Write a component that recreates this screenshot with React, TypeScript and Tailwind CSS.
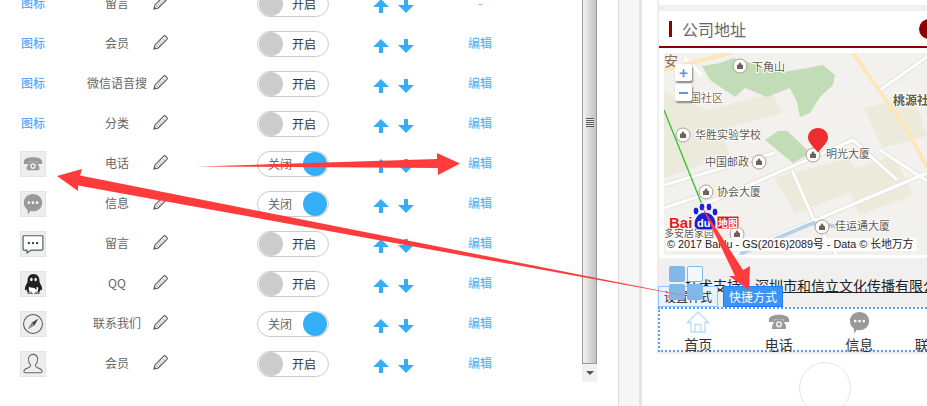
const rows = [
  { icon: "text", name: "留言", on: false },
  { icon: "text", name: "会员", on: false },
  { icon: "text", name: "微信语音搜", on: false },
  { icon: "text", name: "分类", on: false },
  { icon: "phone", name: "电话", on: true },
  { icon: "bubble", name: "信息", on: true },
  { icon: "dialog", name: "留言", on: false },
  { icon: "qq", name: "QQ", on: false },
  { icon: "compass", name: "联系我们", on: true },
  { icon: "user", name: "会员", on: false },
];

function PhoneGlyph({ className }: { className?: string }) {
  return (
    <svg viewBox="0 0 24 24" className={className}>
      <path fill="#999" d="M1 9.5C1 5.5 6.500 4 12 4s11 1.500 11 5.500V12h-6V9H7v3H1z" />
      <path fill="#999" d="M8 9h8l3.500 7v3.500h-15V16z" />
      <circle cx="12" cy="14.500" r="3.400" fill="#eee" />
      <circle cx="12" cy="14.500" r="1.600" fill="#999" />
    </svg>
  );
}

function BubbleGlyph({ className }: { className?: string }) {
  return (
    <svg viewBox="0 0 24 24" className={className}>
      <path fill="#999" d="M12 1c5.800 0 10 4 10 9.500S17.800 20 12 20c-1 0-2-.1-2.900-.4L6.500 23.500 6 18.200C3.500 16.500 2 13.800 2 10.500 2 5 6.200 1 12 1z" />
      <circle cx="7.500" cy="10.500" r="1.400" fill="#fff" />
      <circle cx="12" cy="10.500" r="1.400" fill="#fff" />
      <circle cx="16.500" cy="10.500" r="1.400" fill="#fff" />
    </svg>
  );
}

function RowIcon({ type }: { type: string }) {
  if (type === "text") {
    return <span className="text-[12px] font-medium text-[#5aa9ff] w-[26px] ml-[1px]">图标</span>;
  }
  return (
    <div className="w-[26px] h-[26px] bg-[#eeeeee] border border-[#e4e4e4] flex items-center justify-center mt-[2px]">
      {type === "phone" && <PhoneGlyph className="w-[20px] h-[20px]" />}
      {type === "bubble" && <BubbleGlyph className="w-[22px] h-[22px]" />}
      {type === "dialog" && (
        <svg viewBox="0 0 24 24" className="w-[22px] h-[22px]">
          <path fill="#fff" stroke="#47646b" strokeWidth="1.300" d="M2 3h20a.8.800 0 0 1 .8.800v14a.8.800 0 0 1-.8.800H10l-4.500 3v-3H2a.8.800 0 0 1-.8-.8v-14A.8.800 0 0 1 2 3z" />
          <circle cx="7.500" cy="11" r="1.200" fill="#222" />
          <circle cx="12" cy="11" r="1.200" fill="#222" />
          <circle cx="16.500" cy="11" r="1.200" fill="#222" />
        </svg>
      )}
      {type === "qq" && (
        <svg viewBox="0 0 24 24" className="w-[23px] h-[23px]">
          <path fill="#222" d="M12 1c4 0 6.200 3 6.200 7 0 1 .1 1.800.6 2.600 1 1.600 2.200 3.600 2.200 6 0 1.500-.6 1.800-1.600.6-.3 1.200-.8 2-1.500 2.800l-11.800 0c-.7-.8-1.200-1.600-1.500-2.800-1 1.200-1.600.9-1.600-.6 0-2.400 1.200-4.400 2.200-6 .5-.8.6-1.600.6-2.600 0-4 2.200-7 6.200-7z" />
          <path fill="#fff" d="M7.500 14c3 1 6 1 9 0 .8 2.500.5 5-1 6.500h-7c-1.500-1.500-1.800-4-1-6.500z" />
          <path fill="#222" d="M5.500 11.500c4 1.700 9 1.700 13 0v2c-1.500.8-2.500 1.200-3.500 1.400l.2 2.800-2.600-2.400c-2.500.1-5-.4-7.100-1.800z" />
          <ellipse cx="9.800" cy="6.800" rx="1.300" ry="1.800" fill="#fff" />
          <ellipse cx="14.200" cy="6.800" rx="1.300" ry="1.800" fill="#fff" />
          <path fill="#fff" stroke="#222" strokeWidth=".7" d="M6 20.500c1.500-1 3.500-1 4.800.8H6zM18 20.500c-1.500-1-3.500-1-4.800.8H18z" />
        </svg>
      )}
      {type === "compass" && (
        <svg viewBox="0 0 24 24" className="w-[22px] h-[22px]">
          <circle cx="12" cy="12" r="10.300" fill="none" stroke="#555" strokeWidth="1.100" />
          <path fill="#444" d="M18 6l-4.500 7.500-3-3z" />
          <path fill="#888" d="M6 18l4.500-7.500 3 3z" />
        </svg>
      )}
      {type === "user" && (
        <svg viewBox="0 0 24 24" className="w-[22px] h-[22px]">
          <path fill="none" stroke="#666" strokeWidth="1.100" d="M12 1.500c3.200 0 5 2.400 5 5.500 0 2.500-1 4.500-2.300 5.800-.4 1.500.2 2.300 1.800 3 2.300 1 5.500 1.800 5.500 4 0 1-.8 1.700-2 1.700H4c-1.200 0-2-.7-2-1.700 0-2.200 3.200-3 5.500-4 1.600-.7 2.200-1.500 1.800-3C8 11.500 7 9.500 7 7c0-3.100 1.800-5.500 5-5.500z" />
        </svg>
      )}
    </div>
  );
}

function PencilIcon() {
  return (
    <svg viewBox="0 0 16 16" className="w-[15px] h-[15px] shrink-0 -mt-[2px]">
      <path fill="#fff" stroke="#555" strokeWidth="1.100" d="M1 15l1.200-4.700L11.300 1.200c.6-.6 1.400-.6 2 0l1.500 1.500c.6.600.6 1.400 0 2L5.700 13.800z" />
      <path fill="none" stroke="#555" strokeWidth=".8" d="M3.200 10.800l2 2M4.800 9.200l2 2M6.500 7.500l2 2M8.200 5.800l2 2M10 4l2 2" />
      <path fill="#555" d="M1 15l.7-2.800 2.100 2.100z" />
    </svg>
  );
}

function Toggle({ on }: { on: boolean }) {
  return (
    <div className="w-[72px] h-[26px] mt-[2px] rounded-full border border-[#cccccc] bg-white flex items-center justify-between px-[1px] text-[12px]">
      {on ? (
        <>
          <span className="ml-[9px] text-[#666]">关闭</span>
          <span className="w-[24px] h-[24px] rounded-full bg-[#35aef8]" />
        </>
      ) : (
        <>
          <span className="w-[24px] h-[24px] rounded-full bg-[#cccccc]" />
          <span className="mr-[11px] text-[#333]">开启</span>
        </>
      )}
    </div>
  );
}

function UpArrow() {
  return (
    <svg viewBox="0 0 16 14" className="w-[16px] h-[14px]">
      <path fill="#35aef8" d="M8 0l8 8h-6v6H6V8H0z" />
    </svg>
  );
}

function DownArrow() {
  return (
    <svg viewBox="0 0 16 14" className="w-[16px] h-[14px]">
      <path fill="#35aef8" d="M8 14L0 6h6V0h4v6h6z" />
    </svg>
  );
}

function Row({ row, index }: { row: (typeof rows)[number]; index: number }) {
  return (
    <div className="h-10 flex items-center text-[12px]">
      <div className="w-[20px]" />
      <div className="w-[40px] flex">
        <RowIcon type={row.icon} />
      </div>
      <div className="w-[27px]" />
      <div className="w-[60px] text-center text-[#666] whitespace-nowrap">{row.name}</div>
      <div className="w-[6px]" />
      <PencilIcon />
      <div className="w-[89px]" />
      <Toggle on={row.on} />
      <div className="w-[44px]" />
      <div className="flex gap-[9px] mt-[6px]">
        <UpArrow />
        <DownArrow />
      </div>
      <div className="w-[54px]" />
      <span className="text-[#48adf7] w-[24px] text-center">{index === 0 ? "-" : "编辑"}</span>
    </div>
  );
}

function Scrollbar() {
  return (
    <div className="w-[15px] h-[382px] overflow-hidden flex flex-col shrink-0">
      <div className="h-[484px] shrink-0 -mt-[120px] border border-[#9a9a9a] bg-gradient-to-r from-[#f2f2f2] to-[#c2c2c6] flex items-center justify-center">
        <div className="w-[8px] h-[9px] bg-[repeating-linear-gradient(#555_0px,#555_1px,#eee_1px,#eee_2px)]" />
      </div>
      <div className="h-[18px] shrink-0 bg-[#f0f0f0] flex items-center justify-center">
        <div className="w-0 h-0 border-x-[4px] border-x-transparent border-t-[4px] border-t-[#555]" />
      </div>
    </div>
  );
}

function Poi({ x, y }: { x: number; y: number }) {
  return (
    <g>
      <circle cx={x} cy={y} r="7" fill="#fff" stroke="#a89f94" strokeWidth="1" />
      <path d={`M${x} ${y - 4}l2 3h1v4h-6v-4h1z`} fill="#6d625a" />
    </g>
  );
}

function BaiduMap() {
  const label = { fontSize: 11, fill: "#5f5a54", stroke: "#fff", strokeWidth: 2, paintOrder: "stroke" } as const;
  return (
    <div className="relative h-[202px] ml-[5px] bg-[#f3f1ee] overflow-hidden">
      <svg width="263" height="202" viewBox="0 0 263 202" style={{ fontFamily: '"Noto Sans CJK SC", sans-serif' }}>
        <path fill="#ecebdb" d="M0 38l10 6 36 13 62-17 10 20-62 17 10 25L0 125zM180 120l50-18 20 40-55 20zM110 125l75-20 14 30-68 25zM200 55l50-12 13 40-45 12z" />
        <path fill="#c3dcb8" d="M38 13l18-3 13-5 50 14 24-4 16-3 12 10-2 10-13 12-10 16-10 4-3-15-7-14-23 9-22-9-10 9-25-17zM101 87l13-9 9 0 10 9 13 13-17 10-16-13z" />
        <g fill="none" stroke="#e5e2da" strokeWidth="5">
          <path d="M0 132L110 100M39 152L189 87L233 127M128 117L149 165L173 202M263 120L69 202M216 97L263 128M0 155L39 142" />
          <path d="M216 37L263 4" />
        </g>
        <g fill="none" stroke="#fff" strokeWidth="3">
          <path d="M0 132L110 100M39 152L189 87L233 127M128 117L149 165L173 202M263 120L69 202M216 97L263 128M0 155L39 142" />
          <path d="M216 37L263 4M20 5L38 22" />
        </g>
        <path d="M76 201L149 170L190 176" fill="none" stroke="#b7d0ea" strokeWidth="4" />
        <path d="M0 17L66 0M189 0L243 77L263 114" fill="none" stroke="#fde6b8" strokeWidth="4" />
        <path d="M0 57L39 154" fill="none" stroke="#2fc02f" strokeWidth="1.300" />
        <text x="0" y="13" fontSize="14" fill="#8b6a45">安</text>
        <Poi x={76} y={13} />
        <text x="88" y="18" {...label}>下角山</text>
        <text x="26" y="49" {...label} fill="#8b6a45">国社区</text>
        <text x="229" y="52" fontSize="12" fontWeight="700" fill="#6b5a40" stroke="#fff" strokeWidth="2" paintOrder="stroke">桃源社区</text>
        <Poi x={19} y={82} />
        <text x="31" y="86" {...label}>华胜实验学校</text>
        <text x="41" y="113" {...label}>中国邮政</text>
        <Poi x={95} y={109} />
        <Poi x={149} y={102} />
        <text x="162" y="105" {...label}>明光大厦</text>
        <Poi x={42} y={139} />
        <text x="53" y="143" {...label}>协会大厦</text>
        <Poi x={158} y={174} />
        <text x="171" y="177" {...label}>佳运通大厦</text>
        <text x="0" y="184" {...label} fontSize="10">多安居家园</text>
        <Poi x={73} y={181} />
        <path d="M154 75c-5.500 0-10 4-10 9.500 0 4.500 5 9 10 15 5-6 10-10.500 10-15 0-5.500-4.500-9.500-10-9.500z" fill="#ee2d30" />
        <text x="5" y="175" fontSize="15" fontWeight="700" fill="#e21b1b" stroke="#fff" strokeWidth="2" paintOrder="stroke" style={{ fontFamily: '"Liberation Sans", sans-serif' }}>Bai</text>
        <g fill="#1c1fd6" stroke="#fff" strokeWidth="1">
          <ellipse cx="32" cy="158" rx="3" ry="4" />
          <ellipse cx="38" cy="154" rx="3" ry="4" />
          <ellipse cx="45" cy="154" rx="3" ry="4" />
          <ellipse cx="51" cy="159" rx="3" ry="4" />
          <path d="M41 159c6 0 11 6 11 12 0 4-3 6-6 6H36c-3 0-6-2-6-6 0-6 5-12 11-12z" />
        </g>
        <text x="33" y="174" fontSize="11" fontWeight="700" fill="#fff" style={{ fontFamily: '"Liberation Sans", sans-serif' }}>du</text>
        <rect x="53" y="163" width="22" height="13" fill="#e21b1b" stroke="#fff" />
        <text x="54" y="174" fontSize="10" fontWeight="700" fill="#fff">地图</text>
        <rect x="2" y="185" width="251" height="13" fill="#fff" opacity=".85" />
        <text x="3" y="195" fontSize="10.800" fill="#222" style={{ fontFamily: '"Liberation Sans", "Noto Sans CJK SC", sans-serif' }}>© 2017 Baidu - GS(2016)2089号 - Data © 长地万方</text>
      </svg>
      <div className="absolute left-[11px] top-[11px] w-[17px] h-[17px] bg-white rounded-[2px] shadow-[1px_2px_2px_#888] flex items-center justify-center text-[#6d8cf0] text-[15px] leading-none font-bold">+</div>
      <div className="absolute left-[11px] top-[31px] w-[17px] h-[17px] bg-white rounded-[2px] shadow-[1px_2px_2px_#888] flex items-center justify-center">
        <div className="w-[9px] h-[2px] bg-[#6d8cf0]" />
      </div>
    </div>
  );
}

const navItems = [
  { label: "首页", kind: "home" },
  { label: "电话", kind: "phone" },
  { label: "信息", kind: "bubble" },
  { label: "联系我们", kind: "none" },
];

function BottomNav() {
  return (
    <div className="h-[45px] border-2 border-dotted border-[#5b9bf5] text-[14px] text-[#333] bg-white -ml-[1px]">
      <div className="flex -ml-[2px]">
        {navItems.map((item) => (
          <div key={item.label} className="w-[80.500px] shrink-0 flex flex-col items-center">
            <div className="h-[24px] shrink-0 mt-[1px] flex items-center">
              {item.kind === "home" && (
                <svg viewBox="0 0 24 24" className="w-[24px] h-[24px]">
                  <path fill="none" stroke="#b9dcfb" strokeWidth="1.300" d="M1.500 12.500L12 2l10.500 10.500H19V22H5v-9.500zM9 22v-7.500h6V22" />
                </svg>
              )}
              {item.kind === "phone" && <PhoneGlyph className="w-[22px] h-[22px]" />}
              {item.kind === "bubble" && <BubbleGlyph className="w-[23px] h-[23px]" />}
            </div>
            <span className={item.kind === "none" ? "whitespace-nowrap pl-[6px]" : "whitespace-nowrap"}>{item.label}</span>
          </div>
        ))}
      </div>
    </div>
  );
}

function Arrows() {
  return (
    <svg className="absolute inset-0 pointer-events-none" width="927" height="406" viewBox="0 0 927 406">
      <path fill="#ff3b3b" d="M197 166.500L437 159L437 153L460 163.500L438 175L438 168z" />
      <path fill="#ff3b3b" d="M57 176L82 169L80 175.500L700 298.500L78 185.500L78 191z" />
      <path fill="#ff3b3b" d="M701 205L743 270L750 266L749 290L729 276L735 276z" />
    </svg>
  );
}

export default function App() {
  return (
    <div className="relative w-[927px] h-[406px] overflow-hidden bg-white flex" style={{ fontFamily: '"Noto Sans CJK SC", "Liberation Sans", sans-serif' }}>
      <div className="w-[619px] shrink-0 flex border-r border-[#dddddd]">
        <div className="w-[582px] shrink-0 -mt-[17px]">
          {rows.map((row, i) => (
            <Row key={i} row={row} index={i} />
          ))}
        </div>
        <Scrollbar />
      </div>
      <div className="w-[20px] shrink-0 bg-[#f6f6f6]" />
      <div className="w-[3px] shrink-0 bg-[#e5e5e5]" />
      <div className="w-[15px] shrink-0" />
      <div className="w-[336px] shrink-0">
        <div className="border-x-2 border-b-2 border-[#eeeeee]">
          <div className="h-[5px]" />
          <div className="h-[6px] bg-[#f0f0f0]" />
          <div className="h-[37px] border-b-2 border-[#8b0000] flex items-center text-[16px] text-[#666]">
            <div className="w-[3px] h-[16px] bg-[#8b0000] ml-[10px] mr-[10px]" />
            公司地址
            <div className="w-[20px] h-[20px] rounded-full bg-[#8b0000] ml-auto mr-[52px]" />
          </div>
          <div className="h-[5px]" />
          <BaiduMap />
          <div className="h-[3px]" />
          <div className="relative h-[49px] bg-[#f0f0f0] text-[14px] text-[#222]">
            <div className="absolute left-[26px] top-[17px] whitespace-nowrap">
              技术支持：<span className="underline">深圳市和信立文化传播有限公司</span>
            </div>
            <div className="absolute left-[-1px] bottom-0 w-[60px] h-[21px] bg-[#e6f4ff] border border-[#8cc4ff] text-[12px] flex items-center justify-center">设置样式</div>
            <div className="absolute left-[64px] bottom-0 w-[60px] h-[21px] bg-[#3b93f5] border border-[#1e80ff] text-white text-[12px] flex items-center justify-center">快捷方式</div>
            <div className="absolute left-[10px] top-[8px] grid grid-cols-2 gap-[2px]">
              <div className="w-[16px] h-[16px] rounded-[2px] bg-[#82b8e8]" />
              <div className="w-[16px] h-[16px] rounded-[2px] bg-[#f4f8fb] border border-[#82b8e8]" />
              <div className="w-[16px] h-[16px] rounded-[2px] bg-[#82b8e8]" />
              <div className="w-[16px] h-[16px] rounded-[2px] bg-[#82b8e8]" />
            </div>
          </div>
          <BottomNav />
        </div>
        <div className="w-[52px] h-[52px] rounded-full border border-[#e5e5e5] mx-auto mt-[8px]" />
      </div>
      <Arrows />
    </div>
  );
}
